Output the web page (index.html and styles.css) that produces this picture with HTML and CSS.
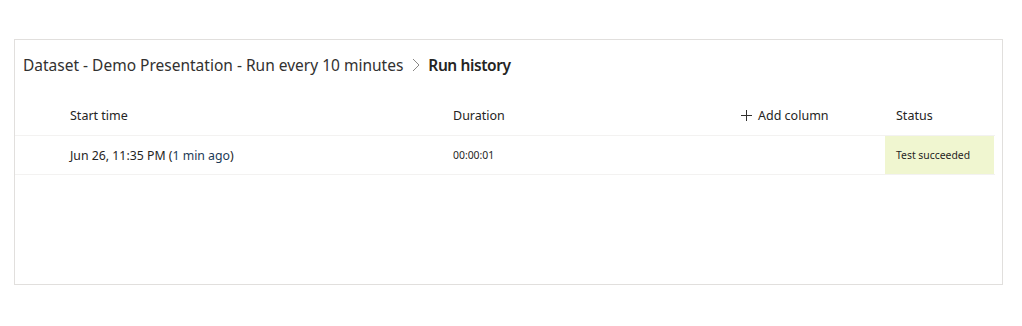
FILE: index.html
```html
<!DOCTYPE html>
<html lang="en-US">
  <head>
    <title>Run history</title>
    <link rel="stylesheet" href="styles.css">
  </head>
  <body>
    <div class="panel">
      <div class="crumbs">
        <span class="crumb">Dataset - Demo Presentation - Run every 10 minutes</span>
        <svg class="chevron" width="8" height="14" viewBox="0 0 8 14"><path d="M1 1 L7 7 L1 13" fill="none" stroke="#8a8886" stroke-width="1"/></svg>
        <span class="crumb current">Run history</span>
      </div>
      <div class="grid">
        <div class="row head">
          <div class="cell spacer"></div>
          <div class="cell">Start time</div>
          <div class="cell">Duration</div>
          <div class="cell add">
            <svg width="11" height="11" viewBox="0 0 11 11"><path d="M5.5 0 V11 M0 5.5 H11" stroke="#323130" stroke-width="1"/></svg>
            Add column
          </div>
          <div class="cell status">Status</div>
        </div>
        <div class="row item">
          <div class="cell spacer"></div>
          <div class="cell">Jun 26, 11:35 PM (<span class="ago">1 min ago</span>)</div>
          <div class="cell small">00:00:01</div>
          <div class="cell"></div>
          <div class="cell small status ok">Test succeeded</div>
        </div>
      </div>
    </div>
  </body>
</html>
```

FILE: styles.css
```css
body {
  margin: 0;
  font-family: "Noto Sans", "Open Sans", sans-serif;
  color: #252423;
  background: #fff;
}

.panel {
  box-sizing: border-box;
  width: 989px;
  height: 246px;
  margin: 39px 0 0 14px;
  border: 1px solid #e1dfdd;
  padding-right: 7px;
}

.crumbs {
  display: flex;
  align-items: center;
  padding: 13px 0 18px 8px;
  height: 24px;
  font-size: 15.5px;
  color: #323130;
}
.chevron {
  margin: 0 8px 0 9px;
}
.crumb.current {
  font-weight: 600;
  letter-spacing: -0.4px;
  color: #252423;
}

.row {
  display: grid;
  grid-template-columns: 47px 383px 288px 152px 109px;
}
.row.head {
  height: 40px;
  border-bottom: 1px solid #f3f2f1;
  font-size: 12.5px;
}
.row.item {
  height: 38px;
  border-bottom: 1px solid #f3f2f1;
  font-size: 12.3px;
}
.cell {
  display: flex;
  align-items: center;
  padding-left: 8px;
  white-space: nowrap;
}
.cell.spacer {
  padding: 0;
}
.cell.add {
  gap: 6px;
}
.cell.small {
  font-size: 10.4px;
}
.cell.status {
  padding-left: 11px;
}
.status.ok {
  background: #f0f6d0;
}
.ago {
  color: #1b3a57;
}
```
